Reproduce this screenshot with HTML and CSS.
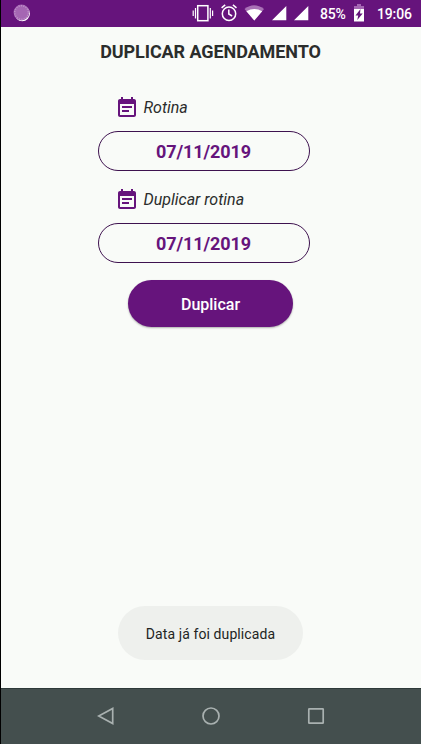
FILE: index.html
```html
<!DOCTYPE html>
<html lang="pt-BR">
<head>
<meta charset="utf-8">
<title>Duplicar agendamento</title>
<link rel="stylesheet" href="styles.css">
</head>
<body>
<svg width="0" height="0" class="defs">
  <symbol id="event-note" viewBox="3 1 18 20">
    <path fill="currentColor" d="M17 10H7v2h10v-2zm2-7h-1V1h-2v2H8V1H6v2H5c-1.110 0-1.990.9-1.990 2L3 19c0 1.100.890 2 2 2h14c1.100 0 2-.9 2-2V5c0-1.100-.9-2-2-2zm0 16H5V8h14v11zm-5-5H7v2h7v-2z"/>
  </symbol>
</svg>
<div class="phone">
  <header class="status">
    <svg class="sync" width="18" height="18" viewBox="0 0 18 18">
      <circle cx="9.300" cy="9.500" r="7.700" fill="#fff"/>
      <circle cx="8.500" cy="8.500" r="7.900" fill="#a566b3"/>
      <circle cx="8.500" cy="8.500" r="6.800" fill="none" stroke="#bd8ec8" stroke-width="1.500" stroke-dasharray="1.200 1.200"/>
    </svg>
    <svg class="indicators" width="118" height="20" viewBox="192 3 118 20">
      <g fill="none" stroke="#fff" stroke-width="1.500">
        <rect x="197.700" y="5.700" width="10.200" height="15"/>
        <path stroke-width="1.200" d="M195.500 8v10.500M193.200 10.500v5.500M210.300 8v10.500M212.600 10.500v5.500"/>
        <circle cx="229" cy="13.700" r="6.700"/>
        <path d="M228.800 9.500v4.500l3.300 2M221.600 7.800l3.600-3M236.500 7.800l-3.600-3"/>
      </g>
      <path fill="#a972b6" d="M244.500 9q9.500-7.500 19.500 0l-9.700 11.500z"/>
      <path fill="#fff" d="M246.400 11.200q8-4.500 15.800 0l-7.900 9.300z"/>
      <path fill="#fff" d="M272 20.300h14.300V6zM294 20.300h14.300V6z"/>
    </svg>
    <span class="percent">85%</span>
    <svg class="battery" width="10" height="18" viewBox="0 0 10 18">
      <path fill="#a566b3" d="M3 0h4v2h3v4H0V2h3z"/>
      <path fill="#fff" d="M0 5h10v12.500H0z"/>
      <path fill="#66147c" d="M6.500 5L1.500 11.500h2.700L3.300 16 8.700 9.500H6z"/>
    </svg>
    <time class="clock">19:06</time>
  </header>
  <main class="content">
    <h1 class="title">DUPLICAR AGENDAMENTO</h1>
    <div class="form">
      <label class="caption" for="from"><svg class="calendar" width="18" height="20"><use href="#event-note"/></svg><span>Rotina</span></label>
      <button class="date" id="from">07/11/2019</button>
      <label class="caption second" for="to"><svg class="calendar" width="18" height="20"><use href="#event-note"/></svg><span>Duplicar rotina</span></label>
      <button class="date" id="to">07/11/2019</button>
    </div>
    <button class="submit">Duplicar</button>
    <div class="toast" role="status">Data já foi duplicada</div>
  </main>
  <nav class="navbar">
    <svg width="18" height="18" viewBox="0 0 18 18"><path d="M15.700 1.500v15L1.700 9z"/></svg>
    <svg width="18" height="18" viewBox="0 0 18 18"><circle cx="9" cy="9" r="8"/></svg>
    <svg width="18" height="18" viewBox="0 0 18 18"><rect x="1.800" y="1.800" width="14.400" height="14.400" rx=".5"/></svg>
  </nav>
</div>
</body>
</html>
```

FILE: styles.css
```css
* { box-sizing: border-box; }
body {
  margin: 0;
  font-family: Roboto, "Liberation Sans", sans-serif;
  color: #2b2d2c;
}
button { font-family: inherit; padding: 0; }
svg { display: block; flex: none; }
.defs { display: none; }
.phone {
  width: 421px;
  height: 744px;
  border-left: 1px solid #000;
  background: #f9fbf8;
  display: flex;
  flex-direction: column;
  overflow: hidden;
}
.status {
  height: 27px;
  flex: none;
  background: #66147c;
  color: #fff;
  display: flex;
  align-items: center;
  font-size: 14px;
  font-weight: 500;
  letter-spacing: -.15px;
  white-space: nowrap;
}
.sync { margin: 0 0 1px 12px; }
.indicators { margin: 0 0 1px 161px; }
.percent { width: 26px; margin-left: 10px; }
.battery { margin: 0 0 1px 8px; }
.clock { margin-left: 13px; }
.content {
  flex: 1;
  display: flex;
  flex-direction: column;
  align-items: center;
  padding-right: 1px;
}
.title {
  margin: 13px 0 0;
  font-size: 18px;
  line-height: 24px;
  font-weight: 700;
  letter-spacing: -.08px;
  white-space: nowrap;
}
.form {
  width: 212px;
  margin: 31px 14px 0 0;
}
.caption {
  display: flex;
  align-items: center;
  gap: 8px;
  height: 24px;
  padding-left: 20px;
  font-size: 16px;
  font-style: italic;
}
.second { margin-top: 16px; }
.calendar { color: #66147c; }
.date {
  display: block;
  width: 212px;
  height: 40px;
  margin-top: 12px;
  border: 1px solid #3e124f;
  border-radius: 20px;
  background: transparent;
  color: #66147c;
  font-size: 18px;
  font-weight: 700;
  letter-spacing: -.1px;
}
.submit {
  width: 165px;
  height: 47px;
  margin-top: 17px;
  border: 0;
  border-radius: 24px;
  background: #66147c;
  color: #fff;
  font-size: 16px;
  font-weight: 500;
  padding-top: 2px;
  box-shadow: 0 1px 2px rgba(0, 0, 0, .3);
}
.toast {
  width: 185px;
  height: 54px;
  margin: auto 0 28px;
  padding-top: 2px;
  border-radius: 27px;
  background: #eef0ed;
  display: flex;
  align-items: center;
  justify-content: center;
  font-size: 14px;
  letter-spacing: .1px;
  color: #222423;
}
.navbar {
  height: 56px;
  flex: none;
  border-top: 1px solid #2e3a39;
  background: #444f4e;
  display: flex;
  align-items: center;
  justify-content: center;
  gap: 87px;
  padding-bottom: 1px;
}
.navbar svg {
  fill: none;
  stroke: #a9b1b0;
  stroke-width: 1.7;
}
```
